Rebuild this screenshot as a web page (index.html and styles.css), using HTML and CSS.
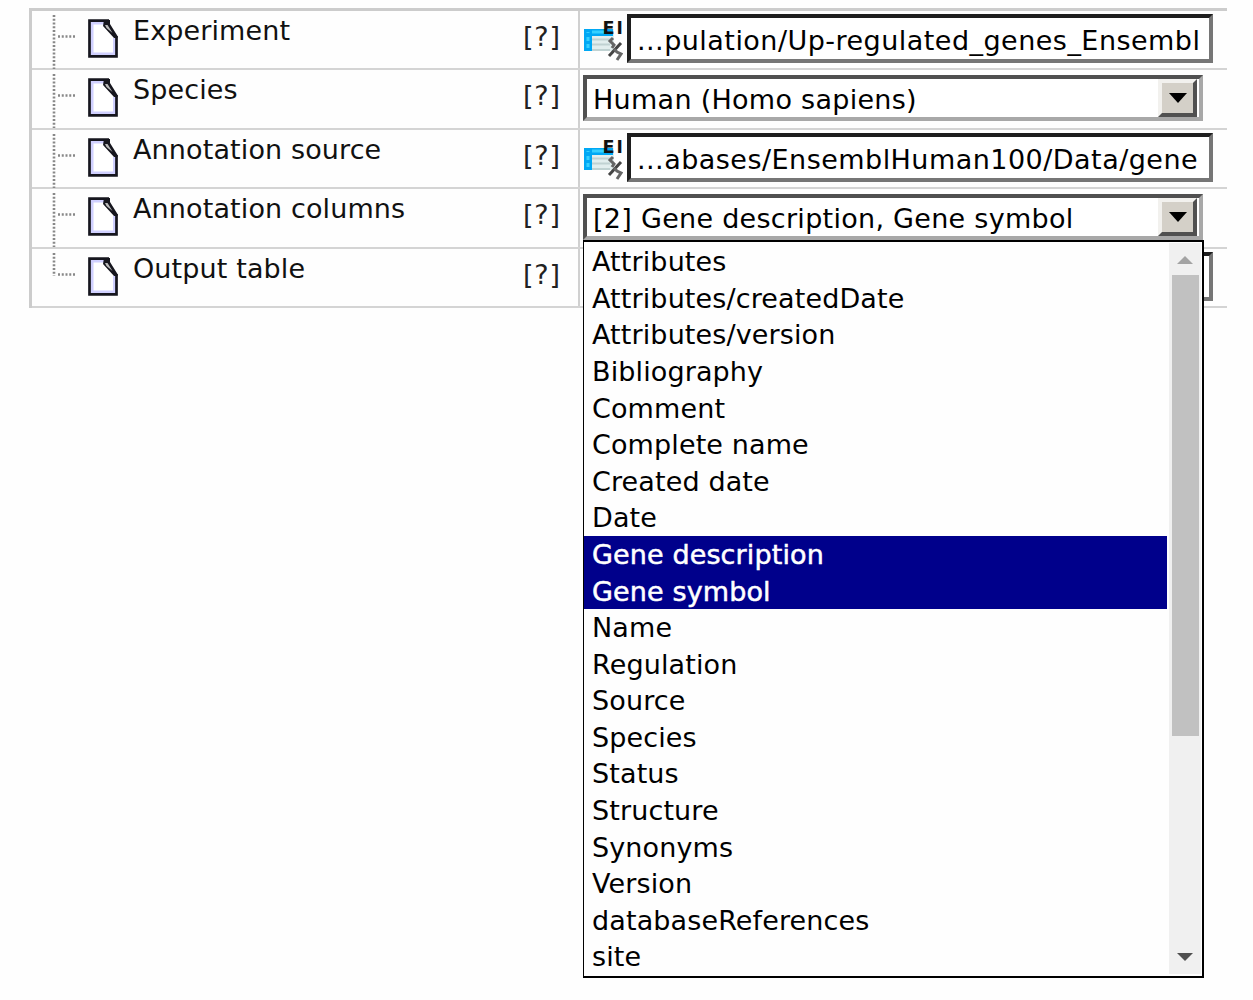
FILE: index.html
```
<!DOCTYPE html>
<html lang="en">
<head>
<meta charset="utf-8">
<title>Annotate table</title>
<link rel="stylesheet" href="styles.css">
</head>
<body>
<svg width="0" height="0" class="defs">
  <defs>
    <symbol id="branch" viewBox="0 0 24 54">
      <path d="M2 0V54M6 21.5H24" fill="none" stroke="#888" stroke-width="2.6" stroke-dasharray="2 1.75"/>
    </symbol>
    <symbol id="last" viewBox="0 0 24 54">
      <path d="M2 0V23M6 21.5H24" fill="none" stroke="#888" stroke-width="2.6" stroke-dasharray="2 1.75"/>
    </symbol>
    <symbol id="doc" viewBox="0 0 30 39">
      <path d="M1.500 1.500H20L28.500 18V37.500H1.500Z" fill="#fff"/>
      <path d="M4 37V4H17M4 35H26.500V19" fill="none" stroke="#d0d0ff" stroke-width="3"/>
      <path d="M28.500 17V37.300H1.500V1.700H21" fill="none" stroke="#16161e" stroke-width="2.700"/>
      <path d="M16 1H22V5L29.500 17V19H26L15 7Z" fill="#16161e"/>
      <path d="M17 6L19.500 6L24.500 14L18.500 9Z" fill="#bbb"/>
    </symbol>
    <symbol id="table" viewBox="0 0 39 41">
      <path d="M0 8H30V30H0Z" fill="#e2eeee"/>
      <path d="M8 18.500H28M8 23.500H26M8 29H26" stroke="#c0d2d2" stroke-width="2"/>
      <path d="M0 8H29V15H8V30H0Z" fill="#00a8f4"/>
      <path d="M8 11H20M4 11V12M4 16V20M4 23V27" stroke="#35d0ff" stroke-width="3"/>
      <text x="18.500" y="13" textLength="12" lengthAdjust="spacingAndGlyphs" class="mark">E</text>
      <text x="32.500" y="13" class="mark">I</text>
      <path d="M25 35L37 22" stroke="#444" stroke-width="3"/>
      <path d="M29 17L26 20L30 24L28 27M30 28L33 31L37 33L33 39" fill="none" stroke="#666" stroke-width="3"/>
    </symbol>
  </defs>
</svg>
<main class="grid">
  <div class="row">
    <div class="name"><svg class="branch"><use href="#branch"/></svg><svg class="doc"><use href="#doc"/></svg><span class="label">Experiment</span><span class="help">[?]</span></div>
    <div class="value"><svg class="table"><use href="#table"/></svg><div class="input">...pulation/Up-regulated_genes_Ensembl</div></div>
  </div>
  <div class="row">
    <div class="name"><svg class="branch"><use href="#branch"/></svg><svg class="doc"><use href="#doc"/></svg><span class="label">Species</span><span class="help">[?]</span></div>
    <div class="value"><div class="select"><span>Human (Homo sapiens)</span><i class="button"></i></div></div>
  </div>
  <div class="row">
    <div class="name"><svg class="branch"><use href="#branch"/></svg><svg class="doc"><use href="#doc"/></svg><span class="label">Annotation source</span><span class="help">[?]</span></div>
    <div class="value"><svg class="table"><use href="#table"/></svg><div class="input">...abases/EnsemblHuman100/Data/gene</div></div>
  </div>
  <div class="row">
    <div class="name"><svg class="branch"><use href="#branch"/></svg><svg class="doc"><use href="#doc"/></svg><span class="label">Annotation columns</span><span class="help">[?]</span></div>
    <div class="value"><div class="select"><span>[2] Gene description, Gene symbol</span><i class="button"></i></div>
      <div class="menu">
        <ul class="options">
          <li>Attributes</li><li>Attributes/createdDate</li><li>Attributes/version</li><li>Bibliography</li><li>Comment</li><li>Complete name</li><li>Created date</li><li>Date</li><li class="on">Gene description</li><li class="on">Gene symbol</li><li>Name</li><li>Regulation</li><li>Source</li><li>Species</li><li>Status</li><li>Structure</li><li>Synonyms</li><li>Version</li><li>databaseReferences</li><li>site</li>
        </ul>
        <div class="scroll"><i class="up"></i><i class="thumb"></i><i class="down"></i></div>
      </div>
    </div>
  </div>
  <div class="row">
    <div class="name"><svg class="branch"><use href="#last"/></svg><svg class="doc"><use href="#doc"/></svg><span class="label">Output table</span><span class="help">[?]</span></div>
    <div class="value"><div class="input output"></div></div>
  </div>
</main>
</body>
</html>
```
FILE: styles.css
```
* { box-sizing: border-box; }
body {
  margin: 0;
  height: 1000px;
  overflow: hidden;
  background: #fefefe;
  color: #000;
  font: 27px/36px "DejaVu Sans", Verdana, sans-serif;
  letter-spacing: 0.12px;
  white-space: nowrap;
}
.defs { position: absolute; }
.grid {
  width: 1198px;
  margin: 8px 0 0 29px;
  border-top: 3px solid #ccc;
  border-left: 3px solid #ccc;
}
.row {
  display: flex;
  height: 59.4px;
  border-bottom: 2px solid #d4d4d4;
}
.name {
  display: flex;
  align-items: flex-start;
  width: 548px;
  padding: 0 17px 0 20px;
  border-right: 2px solid #d0d0d0;
  color: #111;
}
.branch { width: 24px; height: 54px; margin-top: 4px; }
.doc { width: 30px; height: 39px; margin: 8px 0 0 12px; }
.label { margin: 2px 0 0 15px; }
.help { margin: 8px 0 0 auto; color: #222; letter-spacing: 0.9px; }
.value { position: relative; display: flex; align-items: flex-start; padding-left: 3px; }
.table { width: 39px; height: 41px; margin: 10px 0 0 1px; }
.mark { font: bold 17px "DejaVu Sans", sans-serif; letter-spacing: 0; fill: #111; }
.input {
  width: 586px;
  height: 49px;
  margin: 3px 0 0 4px;
  padding: 5px 0 0 6px;
  background: #fff;
  border: 4px solid;
  border-color: #1e1e1e #767676 #767676 #1e1e1e;
  letter-spacing: 0.47px;
}
.output { margin-left: 44px; }
.select {
  display: flex;
  width: 620px;
  height: 46px;
  margin-top: 5px;
  padding: 0 2px 0 6px;
  background: #fff;
  border: 4px solid;
  border-color: #505050 #a8a8a8 #a8a8a8 #505050;
  letter-spacing: 0.28px;
}
.select span { margin-top: 3px; }
.button {
  display: grid;
  place-items: center;
  width: 39px;
  margin-left: auto;
  background: #d4d0c8;
  border: 4px solid;
  border-color: #f2f1ee #505050 #505050 #f2f1ee;
}
.button::after, .up, .down { content: ""; border: solid transparent; }
.button::after { border-width: 10px 9px 0; border-top-color: #000; }
.menu {
  position: absolute;
  z-index: 2;
  top: 51px;
  left: 3px;
  display: flex;
  width: 621px;
  height: 738px;
  padding: 1px 1px 2px 0;
  background: #fefefe;
  border: 2px solid #000;
  border-left-width: 1px;
}
.options { flex: 1; margin: 0; padding: 0; list-style: none; }
.options li { height: 36.6px; padding-left: 8px; line-height: 38px; }
.options .on { background: #00008b; color: #fff; -webkit-text-stroke: 0.5px #fff; }
.scroll { display: flex; flex-direction: column; align-items: center; width: 32px; margin-left: 2px; background: #f0f0f0; }
.up { margin-top: 13px; border-width: 0 8px 8px; border-bottom-color: #a3a3a3; }
.thumb { width: 27px; height: 461px; margin-top: 11px; background: #c1c1c1; }
.down { margin: auto 0 13px; border-width: 8px 8px 0; border-top-color: #505050; }
```
